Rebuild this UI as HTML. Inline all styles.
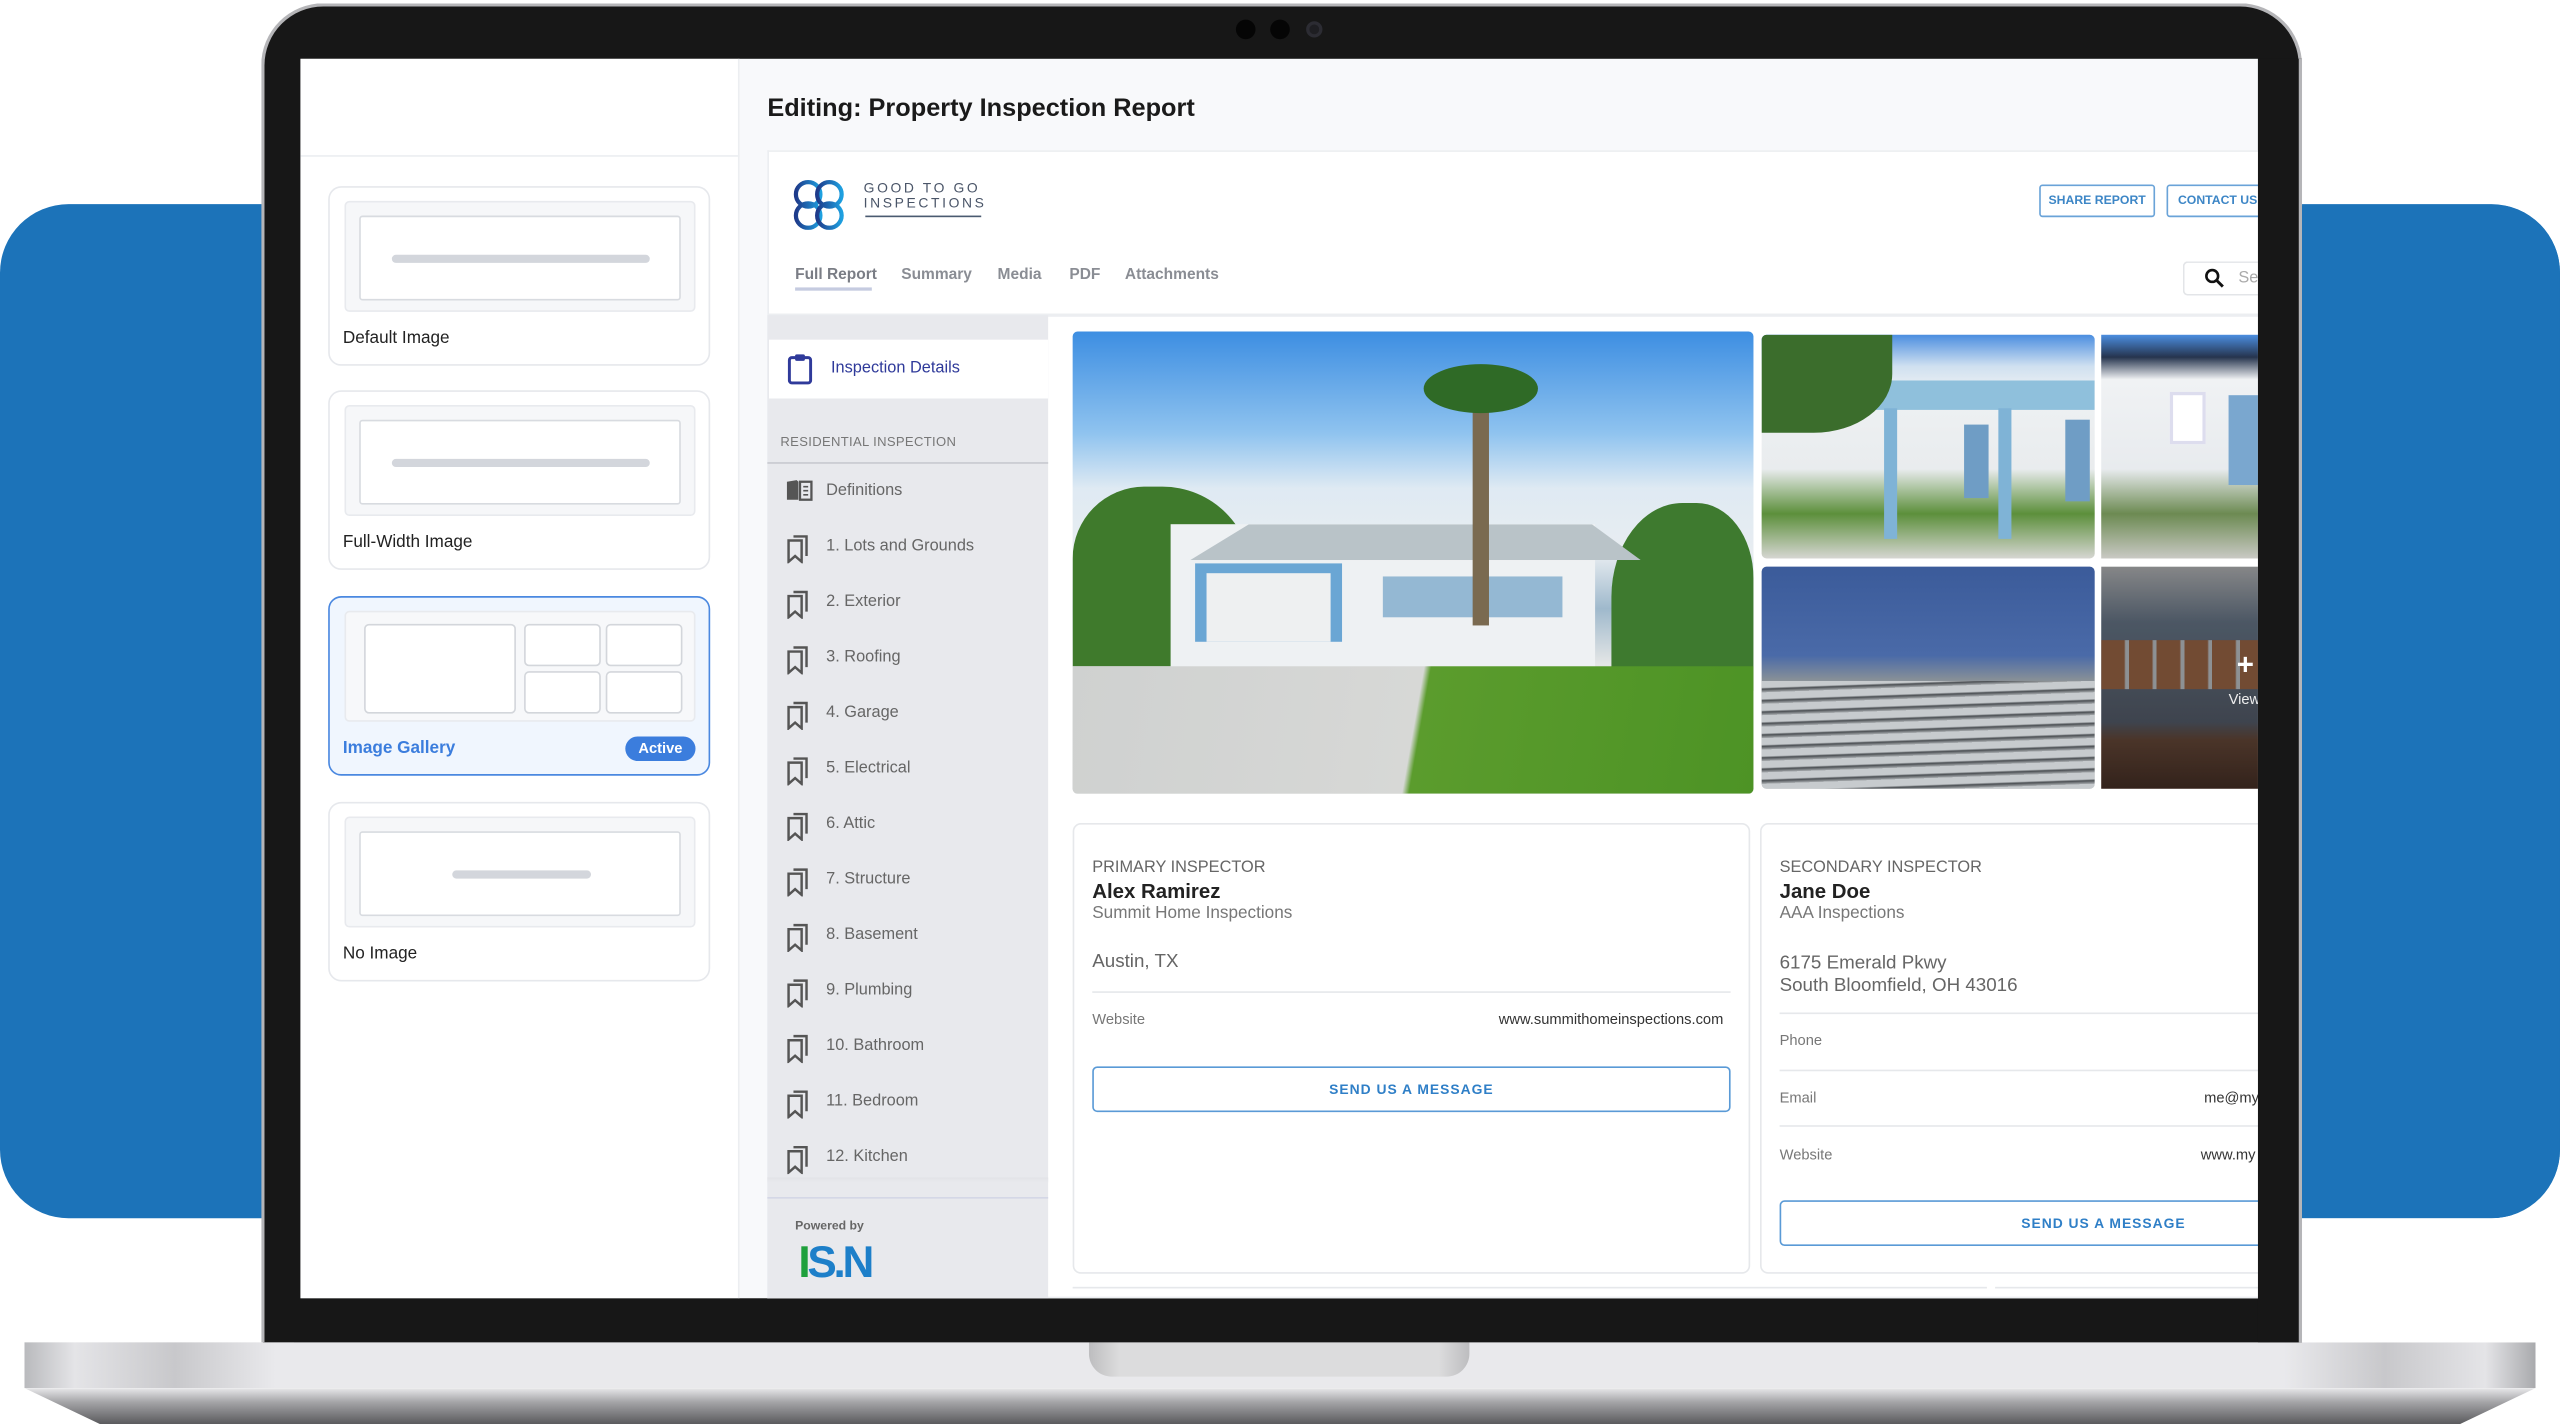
<!DOCTYPE html>
<html><head><meta charset="utf-8"><style>
*{margin:0;padding:0;box-sizing:border-box}
html,body{width:2560px;height:1424px;overflow:hidden;background:#fff}
#st{position:absolute;left:0;top:0;width:1568px;height:872px;transform:scale(1.63265,1.63303);transform-origin:0 0;font-family:"Liberation Sans",sans-serif}
.a{position:absolute}
.t{position:absolute;white-space:nowrap}
.card{position:absolute;left:201px;width:234px;height:110px;border:1.5px solid #e6e8ec;border-radius:8px;background:#fff}
.pv{position:absolute;left:9px;top:8px;width:215px;height:68px;background:#f6f7f9;border:1px solid #e8eaee;border-radius:3px}
.pvi{position:absolute;left:8px;top:8px;width:197px;height:52px;background:#fff;border:1px solid #d8dbe0;border-radius:2px}
.bar{position:absolute;height:5px;background:#d3d6dc;border-radius:3px;top:23px}
.lab{position:absolute;left:8px;top:86px;font-size:10.5px;color:#222}
.nav{position:absolute;left:478px;font-size:10px;color:#666}
.nav svg{position:absolute;left:3px;top:-2px}
.nav span{position:absolute;left:28px;top:0;white-space:nowrap}
.sm{font-size:9px;color:#777}
</style></head><body><div id="st">
<div class="a" style="left:0;top:125px;width:1568px;height:621px;background:#1c73b9;border-radius:42px"></div>
<!-- base -->
<div class="a" style="left:15px;top:822px;width:1538px;height:28px;background:linear-gradient(90deg,#b9babd 0,#e4e4e7 2%,#c8c8cb 6%,#e9e9ec 10%,#e9e9ec 90%,#c8c8cb 94%,#e4e4e7 98%,#a9aaad 100%)"></div>
<div class="a" style="left:15px;top:850px;width:1538px;height:22px;background:linear-gradient(#e8e8ea,#a3a3a6 40%,#5a5a5d);clip-path:polygon(0 0,100% 0,97% 100%,3% 100%)"></div>
<div class="a" style="left:667px;top:822px;width:233px;height:21px;background:linear-gradient(90deg,#bdbdbf,#dcdcdd 8%,#dcdcdd 92%,#bdbdbf);border-radius:0 0 14px 14px"></div>
<!-- bezel -->
<div class="a" style="left:160px;top:2px;width:1250px;height:820px;background:#171717;border-radius:38px 38px 0 0;border:2px solid #b5b5b8;border-bottom:none"></div>
<div class="a" style="left:757px;top:12px;width:12px;height:12px;border-radius:50%;background:#050505"></div>
<div class="a" style="left:778px;top:12px;width:12px;height:12px;border-radius:50%;background:#050505"></div>
<div class="a" style="left:800px;top:13px;width:10px;height:10px;border-radius:50%;background:#1e1e22;border:2px solid #2c2c33"></div>
<!-- screen -->
<div class="a" style="left:184px;top:36px;width:1199px;height:759px;background:#f8f9fb;overflow:hidden">
 <div class="a" style="left:0;top:0;width:269px;height:759px;background:#fff;border-right:1px solid #eceef1"></div>
 <div class="a" style="left:0;top:59px;width:269px;height:1px;background:#eceef1"></div>
</div>
<!-- left cards -->
<div class="card" style="top:114px"><div class="pv"><div class="pvi"><div class="bar" style="left:19px;width:158px"></div></div></div><div class="lab">Default Image</div></div>
<div class="card" style="top:239px"><div class="pv"><div class="pvi"><div class="bar" style="left:19px;width:158px"></div></div></div><div class="lab">Full-Width Image</div></div>
<div class="card" style="top:365px;border-color:#4a88e0;background:#f0f6fe"><div class="pv" style="background:#f7f8fa"><div class="a" style="left:11px;top:7px;width:93px;height:55px;background:#fff;border:1px solid #d3d6db;border-radius:3px"></div><div class="a" style="left:109px;top:7px;width:47px;height:26px;background:#fff;border:1px solid #d3d6db;border-radius:3px"></div><div class="a" style="left:159px;top:7px;width:47px;height:26px;background:#fff;border:1px solid #d3d6db;border-radius:3px"></div><div class="a" style="left:109px;top:36px;width:47px;height:26px;background:#fff;border:1px solid #d3d6db;border-radius:3px"></div><div class="a" style="left:159px;top:36px;width:47px;height:26px;background:#fff;border:1px solid #d3d6db;border-radius:3px"></div></div><div class="lab" style="color:#3b7ddd;font-weight:bold">Image Gallery</div><div class="a" style="left:181px;top:85px;width:43px;height:15px;background:#3b7ddd;border-radius:8px;color:#fff;font-size:9px;font-weight:bold;text-align:center;line-height:15px">Active</div></div>
<div class="card" style="top:491px"><div class="pv"><div class="pvi"><div class="bar" style="left:56px;width:85px"></div></div></div><div class="lab">No Image</div></div>
<!-- main -->
<div class="t" style="left:470px;top:58px;font-size:15.5px;font-weight:bold;color:#1a1a1a">Editing: Property Inspection Report</div>
<div class="a" style="left:470px;top:92px;width:913px;height:703px;background:#fff;border:1px solid #eceef1;border-right:none;overflow:hidden">
 <div class="a" style="left:0;top:99px;width:913px;height:2px;background:#eceef1"></div>
</div>
<svg class="a" style="left:485px;top:109px" width="34" height="34" viewBox="0 0 34 34"><defs><linearGradient id="g" x1="0" x2="1"><stop offset="0" stop-color="#1e3a8a"/><stop offset="1" stop-color="#1ea0e0"/></linearGradient></defs><g fill="none" stroke="url(#g)" stroke-width="2.6"><circle cx="10" cy="10" r="7.5"/><circle cx="23" cy="10" r="7.5"/><circle cx="10" cy="23" r="7.5"/><circle cx="23" cy="23" r="7.5"/></g></svg>
<div class="t" style="left:529px;top:111px;font-size:8.5px;letter-spacing:1.6px;color:#4a5568;line-height:9px">GOOD TO GO<br>INSPECTIONS</div>
<div class="a" style="left:530px;top:132px;width:71px;height:1px;background:#4a5a70"></div>
<div class="a" style="left:1249px;top:113px;width:71px;height:20px;border:1px solid #6aa3d8;border-radius:2px;color:#3d86c6;font-size:7.5px;font-weight:bold;text-align:center;line-height:18px">SHARE REPORT</div>
<div class="a" style="left:1327px;top:113px;width:70px;height:20px;border:1px solid #6aa3d8;border-radius:2px;color:#3d86c6;font-size:7.5px;font-weight:bold;line-height:18px;padding-left:6px">CONTACT US</div>
<div class="t" style="left:487px;top:163px;font-size:9.5px;font-weight:bold;color:#7a7d85">Full Report</div>
<div class="a" style="left:487px;top:176px;width:47px;height:1.5px;background:#c5cbe0"></div>
<div class="t" style="left:552px;top:163px;font-size:9.5px;font-weight:bold;color:#8a8d94">Summary</div>
<div class="t" style="left:611px;top:163px;font-size:9.5px;font-weight:bold;color:#8a8d94">Media</div>
<div class="t" style="left:655px;top:163px;font-size:9.5px;font-weight:bold;color:#8a8d94">PDF</div>
<div class="t" style="left:689px;top:163px;font-size:9.5px;font-weight:bold;color:#8a8d94">Attachments</div>
<div class="a" style="left:1337px;top:160px;width:46px;height:21px;border:1px solid #e3e5e8;border-right:none;border-radius:3px 0 0 3px;background:#fff"></div>
<svg class="a" style="left:1350px;top:164px" width="13" height="13" viewBox="0 0 13 13"><circle cx="5" cy="5" r="3.6" fill="none" stroke="#111" stroke-width="1.6"/><path d="M7.7 7.7L11.5 11.5" stroke="#111" stroke-width="1.8"/></svg>
<div class="t" style="left:1371px;top:165px;font-size:10px;color:#aaa">Se</div>
<!-- sidebar -->
<div class="a" style="left:470px;top:193px;width:172px;height:602px;background:#e8e9ed"></div>
<div class="a" style="left:471px;top:208px;width:171px;height:36px;background:#fff"></div>
<svg class="a" style="left:482px;top:216px" width="16" height="20" viewBox="0 0 16 20"><rect x="1.5" y="3" width="13" height="15.5" rx="1.5" fill="none" stroke="#2f3a9a" stroke-width="1.8"/><rect x="5" y="1" width="6" height="4" rx="1" fill="#2f3a9a"/></svg>
<div class="t" style="left:509px;top:220px;font-size:10px;color:#2f3a9a">Inspection Details</div>
<div class="t" style="left:478px;top:266px;font-size:8px;color:#777;letter-spacing:.2px">RESIDENTIAL INSPECTION</div>
<div class="a" style="left:470px;top:283px;width:172px;height:1px;background:#c8cacf"></div>
<div class="nav" style="top:295px"><svg width="18" height="14" viewBox="0 0 18 14"><path d="M1 2 L7 1 L8 2 L8 13 L1 13Z" fill="#555"/><rect x="9" y="2" width="7" height="11" fill="none" stroke="#555" stroke-width="1.4"/><path d="M11 5h3M11 7.5h3M11 10h3" stroke="#555" stroke-width="1"/></svg><span>Definitions</span></div>
<div id="navs"></div>
<div class="a" style="left:470px;top:721px;width:172px;height:3px;background:linear-gradient(#e2e3e7,#e8e9ed)"></div>
<div class="a" style="left:470px;top:733px;width:172px;height:1px;background:#d4d7e6"></div>
<div class="t" style="left:487px;top:746px;font-size:7.5px;font-weight:bold;color:#666">Powered by</div>
<div class="t" style="left:489px;top:758px;font-size:27px;font-weight:bold;letter-spacing:-2px"><span style="color:#1fa03c">I</span><span style="color:#1d7fc9">S.N</span></div>
<!-- gallery -->
<div class="a" style="left:657px;top:203px;width:417px;height:283px;border-radius:3px;overflow:hidden;background:linear-gradient(180deg,#3d8ee2 0,#8fc3ef 22%,#dfeaf3 34%,#e8edf1 48%,#9fb9cc 60%,#e4e6e6 72%,#c9ccca 86%,#b8bcb8 100%)">
 <div class="a" style="left:0;top:95px;width:110px;height:110px;background:#3f7a2c;border-radius:40% 50% 0 0"></div>
 <div class="a" style="left:330px;top:105px;width:87px;height:115px;background:#3e7a2f;border-radius:50% 40% 0 0"></div>
 <div class="a" style="left:60px;top:118px;width:260px;height:90px;background:#eef1f3"></div>
 <div class="a" style="left:48px;top:118px;width:300px;height:22px;background:#b9c3c8;clip-path:polygon(8% 100%,20% 0,90% 0,100% 100%)"></div>
 <div class="a" style="left:75px;top:142px;width:90px;height:48px;background:#6aa6d4"></div>
 <div class="a" style="left:82px;top:148px;width:76px;height:42px;background:#eef0f1"></div>
 <div class="a" style="left:190px;top:150px;width:110px;height:25px;background:#6d9fc4;opacity:.7"></div>
 <div class="a" style="left:0;top:205px;width:417px;height:78px;background:linear-gradient(100deg,#cfd1d0 0,#d7d8d6 50%,#5b9c2d 51%,#4d9325 100%)"></div>
 <div class="a" style="left:245px;top:30px;width:10px;height:150px;background:#7a6a50"></div>
 <div class="a" style="left:215px;top:20px;width:70px;height:30px;background:#2f6a26;border-radius:50%"></div>
</div>
<div class="a" style="left:1079px;top:205px;width:204px;height:137px;border-radius:3px;overflow:hidden;background:linear-gradient(180deg,#4b8ee0 0,#cfe0f0 14%,#eef1f3 25%,#e9ecee 60%,#5c8f3b 80%,#d6d6d2 100%)">
 <div class="a" style="left:50px;top:28px;width:154px;height:18px;background:#8fc0dc"></div>
 <div class="a" style="left:75px;top:45px;width:8px;height:80px;background:#7fb3d6"></div>
 <div class="a" style="left:145px;top:45px;width:8px;height:80px;background:#7fb3d6"></div>
 <div class="a" style="left:124px;top:55px;width:15px;height:45px;background:#6f9dc5"></div>
 <div class="a" style="left:186px;top:52px;width:15px;height:50px;background:#6f9dc5"></div>
 <div class="a" style="left:0;top:0;width:80px;height:60px;background:#3b6d2c;border-radius:0 0 60% 0"></div>
</div>
<div class="a" style="left:1287px;top:205px;width:96px;height:137px;overflow:hidden;background:linear-gradient(180deg,#4b8ee0 0,#26344e 10%,#f0f2f4 20%,#e8ebee 60%,#6c8a52 80%,#c9c9c4 100%)">
 <div class="a" style="left:42px;top:35px;width:22px;height:32px;background:#fff;border:2px solid #dde"></div>
 <div class="a" style="left:78px;top:37px;width:18px;height:55px;background:#7aa7cf"></div>
</div>
<div class="a" style="left:1079px;top:347px;width:204px;height:136px;border-radius:3px;overflow:hidden;background:linear-gradient(180deg,#3b5b9a 0,#4a6aa8 40%,#8d9396 52%,#b0b4b6 100%)">
 <div class="a" style="left:0;top:70px;width:204px;height:66px;background:repeating-linear-gradient(178deg,#c7cbce 0,#c7cbce 4px,#4a4e52 5px,#a9adb0 7px)"></div>
</div>
<div class="a" style="left:1287px;top:347px;width:96px;height:136px;overflow:hidden;background:linear-gradient(180deg,#c0c1c3 0,#6d7d90 25%,#5a6270 70%,#6b4c3b 78%,#4a3228 100%)">
 <div class="a" style="left:0;top:45px;width:96px;height:30px;background:repeating-linear-gradient(90deg,#a46c4a 0,#a46c4a 14px,#cbd0d5 15px,#cbd0d5 17px)"></div>
 <div class="a" style="left:0;top:0;width:96px;height:136px;background:rgba(0,0,0,.3)"></div>
 <div class="t" style="left:1370px;left:83px;top:50px;color:#fff;font-size:18px;font-weight:bold">+</div>
 <div class="t" style="left:78px;top:76px;color:#eee;font-size:9px">View</div>
</div>
<!-- inspector cards -->
<div class="a" style="left:657px;top:504px;width:415px;height:276px;background:#fff;border:1px solid #e6e8eb;border-radius:5px"></div>
<div class="a" style="left:1078px;top:504px;width:320px;height:276px;background:#fff;border:1px solid #e6e8eb;border-radius:5px"></div>
<div class="a" style="left:657px;top:788px;width:560px;height:8px;border-top:1px solid #e6e8eb"></div>
<div class="a" style="left:1222px;top:788px;width:170px;height:8px;border-top:1px solid #e6e8eb"></div>
<div class="t" style="left:669px;top:526px;font-size:10px;color:#666">PRIMARY INSPECTOR</div>
<div class="t" style="left:669px;top:539px;font-size:12.5px;font-weight:bold;color:#222">Alex Ramirez</div>
<div class="t" style="left:669px;top:553px;font-size:10.5px;color:#777">Summit Home Inspections</div>
<div class="t" style="left:669px;top:583px;font-size:11.5px;color:#666">Austin, TX</div>
<div class="a" style="left:669px;top:607px;width:391px;height:1px;background:#e6e8eb"></div>
<div class="t sm" style="left:669px;top:619px">Website</div>
<div class="t" style="left:918px;top:619px;font-size:9px;color:#333">www.summithomeinspections.com</div>
<div class="a" style="left:669px;top:653px;width:391px;height:28px;border:1px solid #5a9ad6;border-radius:3px;color:#2f7fc7;font-size:8.5px;font-weight:bold;letter-spacing:.6px;text-align:center;line-height:26px">SEND US A MESSAGE</div>
<div class="t" style="left:1090px;top:526px;font-size:10px;color:#666">SECONDARY INSPECTOR</div>
<div class="t" style="left:1090px;top:539px;font-size:12.5px;font-weight:bold;color:#222">Jane Doe</div>
<div class="t" style="left:1090px;top:553px;font-size:10.5px;color:#777">AAA Inspections</div>
<div class="t" style="left:1090px;top:583px;font-size:11.5px;color:#666;line-height:14px">6175 Emerald Pkwy<br>South Bloomfield, OH 43016</div>
<div class="a" style="left:1090px;top:620px;width:300px;height:1px;background:#e6e8eb"></div>
<div class="t sm" style="left:1090px;top:632px">Phone</div>
<div class="a" style="left:1090px;top:655px;width:300px;height:1px;background:#e6e8eb"></div>
<div class="t sm" style="left:1090px;top:667px">Email</div>
<div class="t" style="left:1350px;top:667px;font-size:9px;color:#333">me@my</div>
<div class="a" style="left:1090px;top:689px;width:300px;height:1px;background:#e6e8eb"></div>
<div class="t sm" style="left:1090px;top:702px">Website</div>
<div class="t" style="left:1348px;top:702px;font-size:9px;color:#333">www.my</div>
<div class="a" style="left:1090px;top:735px;width:310px;height:28px;border:1px solid #5a9ad6;border-radius:3px;color:#2f7fc7;font-size:8.5px;font-weight:bold;letter-spacing:.6px;line-height:26px;padding-left:147px">SEND US A MESSAGE</div>
<!-- cover right overflow -->
<div class="a" style="left:1383px;top:36px;width:27px;height:786px;background:#171717"></div>
<div class="a" style="left:1408px;top:36px;width:2px;height:786px;background:#b5b5b8"></div>
<div class="a" style="left:1410px;top:36px;width:158px;height:90px;background:#fff"></div>
<div class="a" style="left:1410px;top:125px;width:158px;height:621px;background:#1c73b9;border-radius:0 42px 42px 0"></div>
<div class="a" style="left:1410px;top:746px;width:158px;height:76px;background:#fff"></div>
</div>
<script>
var n=["1. Lots and Grounds","2. Exterior","3. Roofing","4. Garage","5. Electrical","6. Attic","7. Structure","8. Basement","9. Plumbing","10. Bathroom","11. Bedroom","12. Kitchen"],h="";
for(var i=0;i<n.length;i++){h+='<div class="nav" style="top:'+(329+i*34)+'px"><svg width="16" height="18" viewBox="0 0 16 18"><path d="M2 4h8v13l-4-3.5L2 17z" fill="none" stroke="#555" stroke-width="1.5"/><path d="M5 1.5h8v12" fill="none" stroke="#555" stroke-width="1.5"/></svg><span>'+n[i]+'</span></div>';}
document.getElementById("navs").outerHTML=h;
</script>
</body></html>
